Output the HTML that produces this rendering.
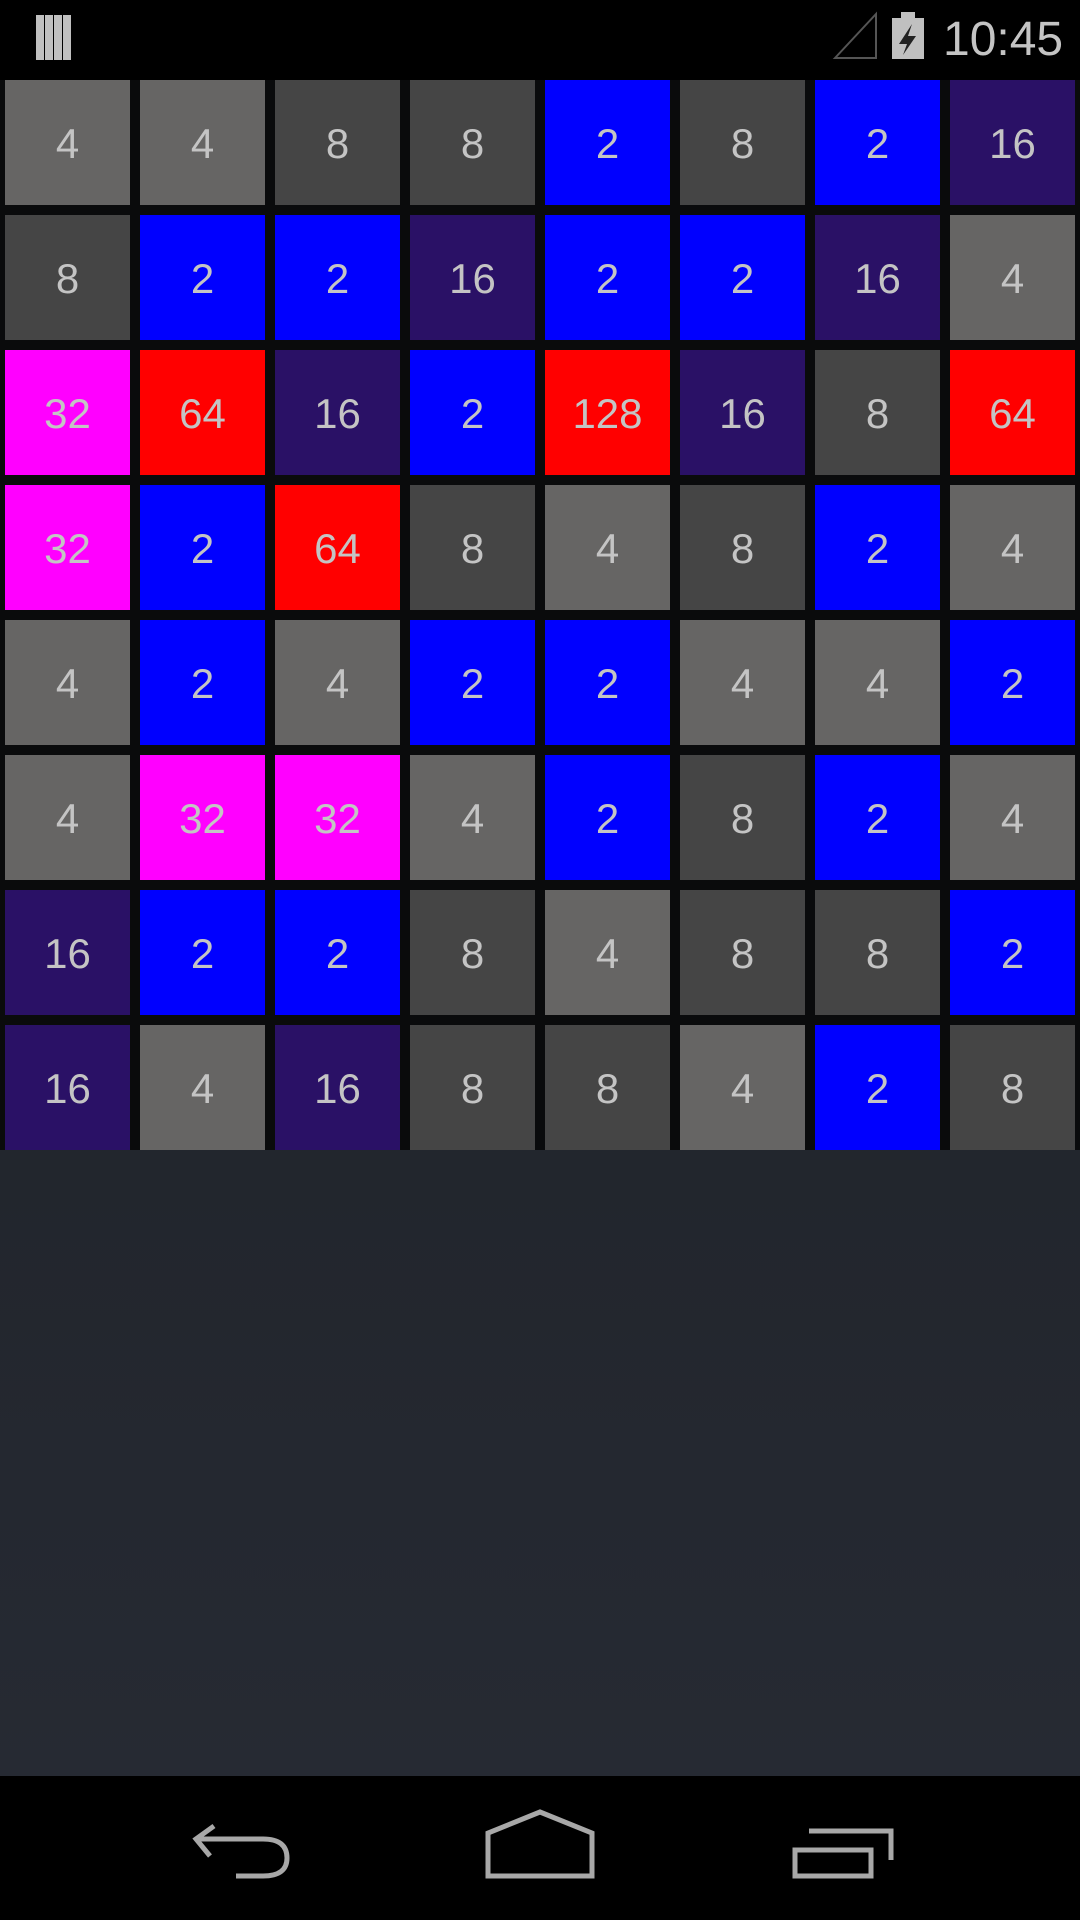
<!DOCTYPE html>
<html><head><style>
body{margin:0;width:1080px;height:1920px;background:#000;position:relative;overflow:hidden;font-family:"Liberation Sans",sans-serif}
#game{position:absolute;top:80px;left:0;width:1080px;height:1696px;background:linear-gradient(#1b1e22,#262a33)}
#grid{position:absolute;top:0;left:0;width:1080px;height:1070px;background:#0a0b0c}
.t{position:absolute;width:125px;height:125px;color:#c4c4c4;font-size:42px;line-height:128px;text-align:center}
.a{background:#666564}.b{background:#454545}.c{background:#0000ff}.d{background:#2a1166}.e{background:#ff00ff}.f{background:#ff0000}
#time{position:absolute;left:943px;top:12px;color:#c4c4c4;font-size:48px}
</style></head><body>
<svg width="1080" height="80" style="position:absolute;top:0;left:0">
<g fill="#c0c0c0"><rect x="36" y="15" width="8" height="45"/><rect x="45" y="15" width="8" height="45"/><rect x="54" y="15" width="8" height="45"/><rect x="63" y="15" width="8" height="45"/></g>
<path d="M835 58 L876 14 L876 58 Z" fill="none" stroke="#555" stroke-width="2"/>
<rect x="892" y="18" width="32" height="41" fill="#c0c0c0"/><rect x="901" y="12" width="14" height="7" fill="#c0c0c0"/>
<path d="M912 24 L899 44 L907 44 L903 55 L916 36 L908 36 Z" fill="#222"/>
</svg>
<div id="time">10:45</div>
<div id="game"><div id="grid"></div></div>
<div id="tiles" style="position:absolute;top:80px;left:0"></div>
<svg width="1080" height="144" style="position:absolute;top:1776px;left:0" fill="none" stroke="#a8a8a8" stroke-width="5">
<path d="M198 63 L263 63 Q287 63 287 82 Q287 100 263 100 L236 100"/><path d="M214 50 L196 63 L210 80"/>
<path d="M488 100 L592 100 L592 57 L540 36 L488 57 Z"/>
<path d="M795 74 L871 74 L871 100 L795 100 Z"/><path d="M809 55 L891 55 L891 84"/>
</svg>
<script>
var g=[
"a4 a4 b8 b8 c2 b8 c2 d16",
"b8 c2 c2 d16 c2 c2 d16 a4",
"e32 f64 d16 c2 f128 d16 b8 f64",
"e32 c2 f64 b8 a4 b8 c2 a4",
"a4 c2 a4 c2 c2 a4 a4 c2",
"a4 e32 e32 a4 c2 b8 c2 a4",
"d16 c2 c2 b8 a4 b8 b8 c2",
"d16 a4 d16 b8 b8 a4 c2 b8"];
var h="";
g.forEach(function(r,i){r.split(" ").forEach(function(c,j){h+='<div class="t '+c[0]+'" style="left:'+(5+135*j)+'px;top:'+(135*i)+'px">'+c.slice(1)+'</div>';});});
document.getElementById("tiles").innerHTML=h;
</script>
</body></html>
